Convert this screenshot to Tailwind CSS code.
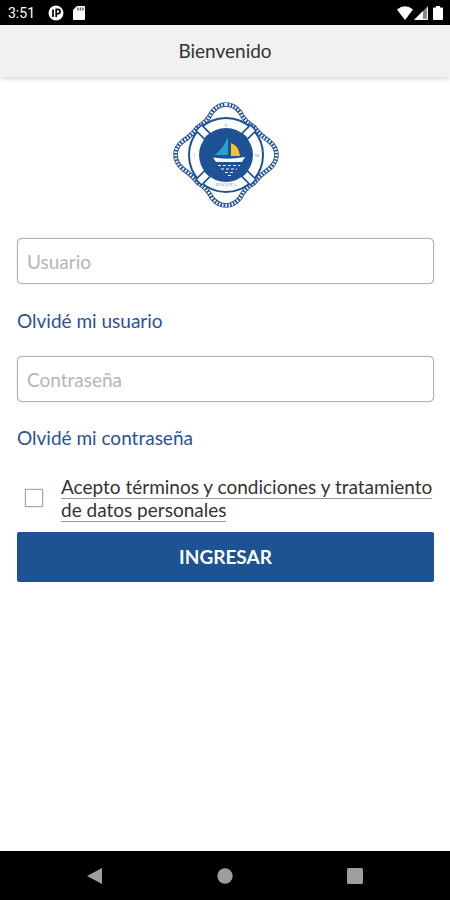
<!DOCTYPE html>
<html lang="es">
<head>
    <meta charset="UTF-8">
    <meta name="viewport" content="width=device-width, initial-scale=1.0">
    <title>Bienvenido</title>
    <script src="https://cdn.jsdelivr.net/npm/@tailwindcss/browser@4"></script>
</head>
<body class="min-h-screen flex flex-col bg-white text-[#333] text-[19px] font-['Lato',sans-serif]">
    <!-- Status bar -->
    <div class="h-[25px] shrink-0 bg-black text-white flex items-center justify-between pl-2 pr-[7px]">
        <div class="flex items-center">
            <span class="w-10 text-sm font-['Roboto',sans-serif]">3:51</span>
            <svg class="w-4 h-4" viewBox="0 0 16 16">
                <circle cx="8" cy="8" r="7.5" fill="#fff"/>
                <path d="M5 4.500v7.500M8.200 12V4.400h1.600a2.200 2.200 0 0 1 0 4.400H8.200" fill="none" stroke="#000" stroke-width="1.700"/>
            </svg>
            <svg class="w-3 h-4 ml-[9px]" viewBox="0 0 12 16">
                <path d="M4 1h7q1 0 1 1v12q0 1-1 1H1q-1 0-1-1V5z" fill="#fff"/>
                <path d="M5 2.500v3M7.500 2.500v3M10 2.500v3" stroke="#555" stroke-width="1.400"/>
            </svg>
        </div>
        <div class="flex items-center">
            <svg class="w-4 h-4" viewBox="0 0 16 16">
                <path d="M0 4.500Q8-2 16 4.500L8 15z" fill="#fff"/>
            </svg>
            <svg class="w-[14px] h-4 ml-px" viewBox="0 0 14 16">
                <path d="M14 1v14H0z" fill="#888"/>
                <path d="M9 6v9H0z" fill="#fff"/>
                <path d="M13.400 2.500v11.900H9" fill="none" stroke="#fff"/>
            </svg>
            <svg class="w-[10px] h-4 ml-[5px]" viewBox="0 0 10 16">
                <path d="M3 1h4v1.500h2q1 0 1 1V14q0 1-1 1H1q-1 0-1-1V3.500q0-1 1-1h2z" fill="#fff"/>
            </svg>
        </div>
    </div>

    <header class="h-[52px] shrink-0 bg-[#f1f1f1] flex items-center justify-center shadow-[0_1px_6px_rgba(0,0,0,0.2)]">
        <h1>Bienvenido</h1>
    </header>

    <main class="grow flex flex-col pl-[17px] pr-4 pt-[25px]">
        <svg class="w-[106px] h-[106px] self-center" viewBox="7 7 106 106" role="img" aria-label="Logo">
            <!-- Rope -->
            <path id="rope" d="M60 9.500Q68 9.500 74 17Q79 27 88 32Q94 40 103 46Q110.500 52 110.500 60Q110.500 68 103 74Q94 80 88 88Q79 93 74 103Q68 110.500 60 110.500Q52 110.500 46 103Q41 93 32 88Q26 80 17 74Q9.500 68 9.500 60Q9.500 52 17 46Q26 40 32 32Q41 27 46 17Q52 9.500 60 9.500z" fill="#fff" stroke="#24549a" stroke-width="4.600"/>
            <path d="M60 9.500Q68 9.500 74 17Q79 27 88 32Q94 40 103 46Q110.500 52 110.500 60Q110.500 68 103 74Q94 80 88 88Q79 93 74 103Q68 110.500 60 110.500Q52 110.500 46 103Q41 93 32 88Q26 80 17 74Q9.500 68 9.500 60Q9.500 52 17 46Q26 40 32 32Q41 27 46 17Q52 9.500 60 9.500z" fill="none" stroke="#fff" stroke-width="3" stroke-dasharray="1.500 1.700"/>
            <!-- Ring -->
            <circle cx="60" cy="60" r="37" fill="#fff" stroke="#1d5297" stroke-width="2"/>
            <circle cx="60" cy="60" r="27" fill="#1d5297"/>
            <!-- Straps -->
            <g fill="#fff" stroke="#1d5297" stroke-width="1.700">
                <path id="strap" d="M56 21.500h8v12.500q-4-1.200-8 0z" transform="rotate(45 60 60)"/>
                <use href="#strap" transform="rotate(90 60 60)"/>
                <use href="#strap" transform="rotate(180 60 60)"/>
                <use href="#strap" transform="rotate(270 60 60)"/>
            </g>
            <g fill="#8b9db8" font-size="5" text-anchor="middle" font-family="Liberation Serif, serif">
                <text x="60" y="32">E</text>
                <text x="28" y="62">J</text>
                <text x="91" y="62">M</text>
                <text x="60" y="91">BOGOTÁ</text>
            </g>
            <!-- Boat -->
            <path d="M62 42v18H48.500Q57 54 62 42z" fill="#2ba0cf"/>
            <path d="M65 48q8 3 9 13h-9z" fill="#fbc02d"/>
            <path d="M63.500 42v20" stroke="#1d5297"/>
            <path d="M47 62.500q15 2.500 32-.5l-3 5H50z" fill="#fff"/>
            <path d="M52 70.500h22M55 74h16M59 77.500h9M62 80.500h4" stroke="#fff" stroke-width="1.200" stroke-dasharray="3 2"/>
        </svg>

        <form class="mt-[30px] flex flex-col">
            <input id="usuario" type="text" placeholder="Usuario" aria-label="Usuario" class="w-full h-[46px] px-[9px] rounded-[5px] border border-[#b4b4b4] shadow-[0_0_1px_#999] bg-white placeholder:text-[#b5b5b5]">
            <a href="#" class="self-start mt-[25px] leading-6 text-[#2a5298]">Olvidé mi usuario</a>

            <input id="contrasena" type="password" placeholder="Contraseña" aria-label="Contraseña" class="mt-[23px] w-full h-[46px] px-[9px] rounded-[5px] border border-[#b4b4b4] shadow-[0_0_1px_#999] bg-white placeholder:text-[#b5b5b5]">
            <a href="#" class="self-start mt-6 leading-6 text-[#2a5298]">Olvidé mi contraseña</a>

            <div class="mt-[25px] flex items-center pl-2">
                <input id="terminos" type="checkbox" class="appearance-none shrink-0 w-[18px] h-[18px] border border-[#a8a8a8] shadow-[0_0_1px_#999] checked:bg-[#1d5293]">
                <label for="terminos" class="ml-[18px] leading-[23px]"><span class="border-b border-[#999]">Acepto términos y condiciones y tratamiento de datos personales</span></label>
            </div>

            <button type="submit" class="mt-[11px] h-[50px] rounded-xs bg-[#1d5293] text-white font-bold">INGRESAR</button>
        </form>
    </main>

    <!-- Navigation bar -->
    <nav class="h-[49px] shrink-0 bg-black flex items-center justify-center gap-[106px]">
        <button type="button" aria-label="Atrás" class="w-6">
            <svg class="w-6 h-6" viewBox="0 0 24 24"><path d="M4 12L19 4v16z" fill="#9e9e9e"/></svg>
        </button>
        <button type="button" aria-label="Inicio" class="w-6">
            <svg class="w-6 h-6" viewBox="0 0 24 24"><circle cx="12" cy="12" r="7.700" fill="#9e9e9e"/></svg>
        </button>
        <button type="button" aria-label="Recientes" class="w-6">
            <svg class="w-6 h-6" viewBox="0 0 24 24"><rect x="4" y="4" width="16" height="16" rx="1.500" fill="#9e9e9e"/></svg>
        </button>
    </nav>
</body>
</html>
